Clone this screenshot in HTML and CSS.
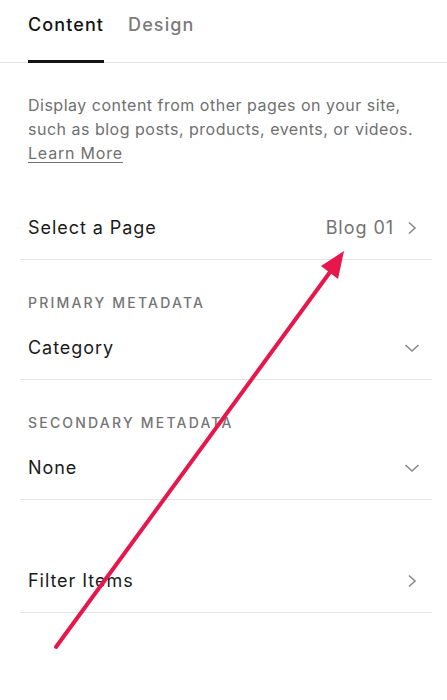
FILE: index.html
```html
<!DOCTYPE html>
<html lang="en">
<head>
  <meta charset="UTF-8">
  <meta name="viewport" content="width=device-width, initial-scale=1.0">
  <title>Summary Block - Content</title>
  <link rel="stylesheet" href="styles.css">
</head>
<body>
  <div class="panel">
    <nav class="tabs">
      <span class="tab active">Content</span>
      <span class="tab">Design</span>
    </nav>

    <p class="intro">
      Display content from other pages on your site,<br>
      such as blog posts, products, events, or videos.<br>
      <a href="#" class="learn">Learn More</a>
    </p>

    <div class="row">
      <span class="row-label">Select a Page</span>
      <span class="row-value">Blog 01
        <svg class="chev" width="12" height="14" viewBox="0 0 12 14"><path d="M3 1.5 L9 7 L3 12.5" fill="none" stroke="#8a8a8a" stroke-width="1.6"/></svg>
      </span>
    </div>

    <div class="group">
      <div class="group-title">PRIMARY METADATA</div>
      <div class="row select">
        <span class="row-label">Category</span>
        <svg class="chev" width="16" height="10" viewBox="0 0 16 10"><path d="M1.5 2 L8 8 L14.5 2" fill="none" stroke="#8a8a8a" stroke-width="1.6"/></svg>
      </div>
    </div>

    <div class="group">
      <div class="group-title">SECONDARY METADATA</div>
      <div class="row select">
        <span class="row-label">None</span>
        <svg class="chev" width="16" height="10" viewBox="0 0 16 10"><path d="M1.5 2 L8 8 L14.5 2" fill="none" stroke="#8a8a8a" stroke-width="1.6"/></svg>
      </div>
    </div>

    <div class="row filter">
      <span class="row-label">Filter Items</span>
      <svg class="chev" width="12" height="14" viewBox="0 0 12 14"><path d="M3 1.5 L9 7 L3 12.5" fill="none" stroke="#8a8a8a" stroke-width="1.6"/></svg>
    </div>
  </div>

  <!-- annotation arrow over the panel -->
  <svg class="arrow" width="447" height="700" viewBox="0 0 447 700">
    <line x1="56" y1="647" x2="333" y2="268" stroke="#e8174b" stroke-width="4" stroke-linecap="round"/>
    <polygon points="344,251 321,266 338,279" fill="#e8174b"/>
  </svg>
</body>
</html>
```

FILE: styles.css
```css
body {
  margin: 0;
  background: #ffffff;
  font-family: Inter, "Open Sans", sans-serif;
  color: #1a1a1a;
}

.panel {
  width: 447px;
  height: 700px;
}

.tabs {
  display: flex;
  gap: 24px;
  height: 63px;
  padding-left: 28px;
  border-bottom: 1px solid #e3e3e3;
  box-sizing: border-box;
}

.tab {
  font-size: 18px;
  font-weight: 500;
  letter-spacing: 1.1px;
  color: #7a7a7a;
  padding-top: 13px;
  line-height: 24px;
}

.tab.active {
  color: #141414;
  border-bottom: 3px solid #141414;
  margin-bottom: -1px;
}

.intro {
  margin: 30px 0 0;
  padding: 0 8px 0 28px;
  font-size: 16px;
  line-height: 24px;
  letter-spacing: 0.5px;
  white-space: nowrap;
  color: #707070;
}

.learn {
  color: #707070;
  letter-spacing: 0.8px;
  text-decoration: underline;
  text-underline-offset: 3px;
  text-decoration-thickness: 1px;
}

.row {
  display: flex;
  align-items: center;
  justify-content: space-between;
  height: 64px;
  margin: 0 15px 0 20px;
  padding: 0 14px 0 8px;
  border-bottom: 1px solid #e3e3e3;
  box-sizing: border-box;
  font-size: 18px;
  letter-spacing: 0.95px;
}

.row-label {
  color: #1a1a1a;
}

.row-value {
  display: flex;
  align-items: center;
  gap: 12px;
  color: #737373;
}

.chev {
  display: block;
}

.select {
  padding-right: 12px;
}

.group {
  padding-top: 35px;
}

.group-title {
  padding-left: 28px;
  font-size: 14px;
  font-weight: 500;
  letter-spacing: 2.2px;
  line-height: 16px;
  color: #757575;
  margin-bottom: 5px;
}

.row:first-of-type {
  margin-top: 31px;
}

.filter {
  margin-top: 49px;
}

.arrow {
  position: absolute;
  left: 0;
  top: 0;
  pointer-events: none;
}
```
